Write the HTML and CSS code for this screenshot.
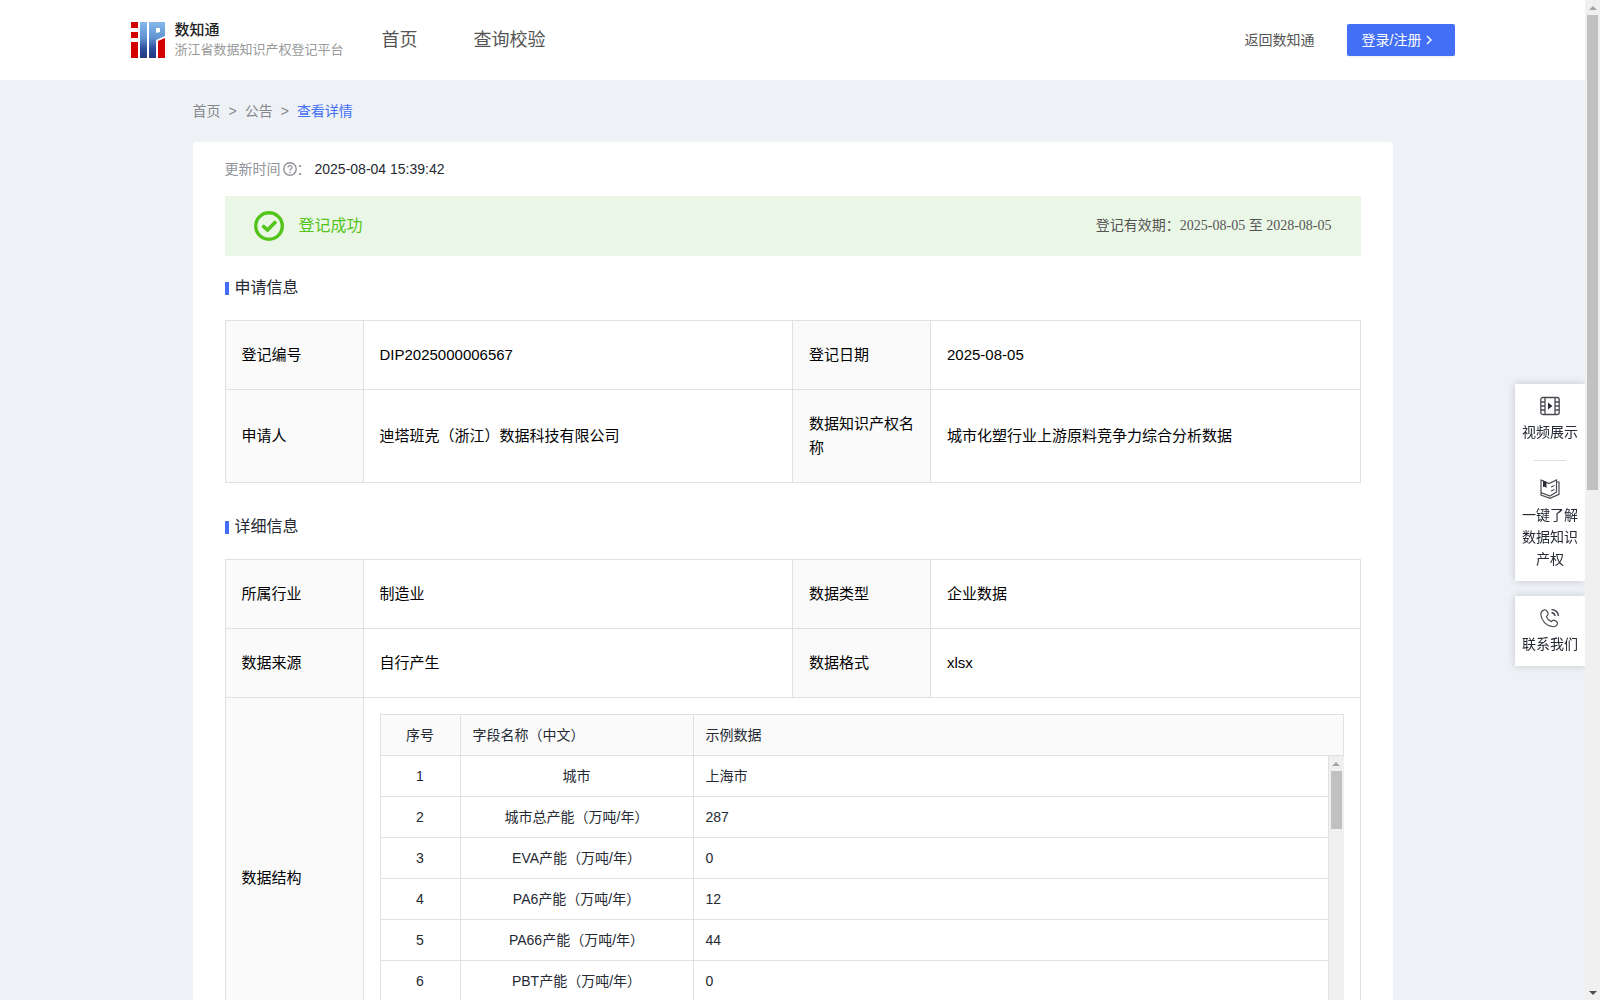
FILE: index.html
```html
<!DOCTYPE html>
<html lang="zh-CN">

<head>
  <meta charset="UTF-8">
  <meta name="viewport" content="width=device-width, initial-scale=1.0">
  <title>浙江省数据知识产权登记平台</title>
  <link rel="stylesheet" href="styles.css">
</head>

<body>

  <div class="page">
    <header class="header">
      <div class="header-inner">
        <a class="logo" href="#">
          <svg class="logo-icon" width="34" height="36" viewBox="0 0 34 36" aria-hidden="true">
            <defs>
              <linearGradient id="logoBlue" x1="0" y1="0" x2="0" y2="36" gradientUnits="userSpaceOnUse">
                <stop offset="0" stop-color="#86b8ec" />
                <stop offset="0.45" stop-color="#5f92d0" />
                <stop offset="0.75" stop-color="#2c4c9c" />
                <stop offset="1" stop-color="#27397f" />
              </linearGradient>
            </defs>
            <path fill="#d40000" d="M0 0h7v6H0zM0 10h7v6H0zM0 20h7v16H0zM27 19l7-3v20h-7z" />
            <path fill="url(#logoBlue)" fill-rule="evenodd" d="M9 0h7v36H9zM18 0h16v14l-9 4v18h-7zM25 6v5l4-1V6z" />
          </svg>
          <span class="logo-text">
            <strong>数知通</strong>
            <small>浙江省数据知识产权登记平台</small>
          </span>
        </a>
        <nav class="nav">
          <a href="#">首页</a>
          <a href="#">查询校验</a>
        </nav>
        <div class="header-right">
          <a class="back" href="#">返回数知通</a>
          <button class="login" type="button">登录/注册
            <svg width="8" height="10" viewBox="0 0 8 10" aria-hidden="true"><path d="M2 1l4 4-4 4" fill="none" stroke="#fff" stroke-width="1.4" /></svg>
          </button>
        </div>
      </div>
    </header>

    <main class="main">
      <div class="breadcrumb">
        <a href="#">首页</a><span>&gt;</span><a href="#">公告</a><span>&gt;</span><a class="current" href="#">查看详情</a>
      </div>

      <div class="card">
        <div class="update">
          <span class="update-label">更新时间</span>
          <svg class="help" width="14" height="14" viewBox="0 0 14 14" aria-hidden="true">
            <circle cx="7" cy="7" r="6.2" fill="none" stroke="#909399" stroke-width="1.4" />
            <path d="M5 5.6c0-2.6 4-2.6 4 0 0 1.4-2 1.4-2 2.8" fill="none" stroke="#909399" stroke-width="1.2" />
            <circle cx="7" cy="10.2" r="0.8" fill="#909399" />
          </svg>
          <span class="update-label">：</span>
          <span class="update-time">2025-08-04 15:39:42</span>
        </div>

        <div class="status">
          <svg width="30" height="30" viewBox="0 0 30 30" aria-hidden="true">
            <circle cx="15" cy="15" r="13.3" fill="none" stroke="#52c41a" stroke-width="3.4" />
            <path d="M8.5 14.5l5 4.5 8.5-8.5" fill="none" stroke="#52c41a" stroke-width="3.6" />
          </svg>
          <span class="status-text">登记成功</span>
          <span class="status-date">登记有效期：2025-08-05 至 2028-08-05</span>
        </div>

        <h2 class="title">申请信息</h2>
        <table class="info">
          <colgroup><col class="col-label"><col><col class="col-label"><col></colgroup>
          <tr>
            <th>登记编号</th>
            <td>DIP2025000006567</td>
            <th>登记日期</th>
            <td>2025-08-05</td>
          </tr>
          <tr>
            <th>申请人</th>
            <td>迪塔班克（浙江）数据科技有限公司</td>
            <th>数据知识产权名称</th>
            <td>城市化塑行业上游原料竞争力综合分析数据</td>
          </tr>
        </table>

        <h2 class="title">详细信息</h2>
        <table class="info">
          <colgroup><col class="col-label"><col><col class="col-label"><col></colgroup>
          <tr>
            <th>所属行业</th>
            <td>制造业</td>
            <th>数据类型</th>
            <td>企业数据</td>
          </tr>
          <tr>
            <th>数据来源</th>
            <td>自行产生</td>
            <th>数据格式</th>
            <td>xlsx</td>
          </tr>
          <tr>
            <th>数据结构</th>
            <td class="struct-cell" colspan="3">
              <table class="struct">
                <colgroup><col class="col-no"><col class="col-name"><col></colgroup>
                <tr>
                  <th class="center">序号</th>
                  <th>字段名称（中文）</th>
                  <th>示例数据</th>
                </tr>
              </table>
              <div class="struct-scroll">
                <div class="struct-view">
                  <table class="struct struct-body">
                    <colgroup><col class="col-no"><col class="col-name"><col></colgroup>
                    <tr><td>1</td><td>城市</td><td>上海市</td></tr>
                    <tr><td>2</td><td>城市总产能（万吨/年）</td><td>287</td></tr>
                    <tr><td>3</td><td>EVA产能（万吨/年）</td><td>0</td></tr>
                    <tr><td>4</td><td>PA6产能（万吨/年）</td><td>12</td></tr>
                    <tr><td>5</td><td>PA66产能（万吨/年）</td><td>44</td></tr>
                    <tr><td>6</td><td>PBT产能（万吨/年）</td><td>0</td></tr>
                  </table>
                </div>
                <div class="scrollbar" aria-hidden="true">
                  <i class="arrow up"></i>
                  <div class="track"><div class="thumb thumb-struct"></div></div>
                  <i class="arrow down"></i>
                </div>
              </div>
            </td>
          </tr>
        </table>
      </div>
    </main>

    <!-- 右侧悬浮栏 -->
    <aside class="side">
      <div class="side-box">
        <a class="side-item" href="#">
          <svg width="20" height="20" viewBox="0 0 20 20" fill="none" stroke="#4a4a52" stroke-width="1.3" aria-hidden="true">
            <rect x="0.8" y="1.5" width="18.4" height="17" rx="2" />
            <path d="M5 1.5v17M15 1.5v17M1 6h4M1 10h4M1 14h4M15 6h4M15 10h4M15 14h4" />
            <path d="M8 6.5v7l4.5-3.5z" fill="#2b2b36" stroke="none" />
          </svg>
          <span>视频展示</span>
        </a>
        <hr>
        <a class="side-item" href="#">
          <svg width="20" height="20" viewBox="0 0 20 20" fill="none" stroke="#4a4a52" stroke-width="1.2" aria-hidden="true">
            <path d="M1 1l8 3.5L16.5 1v12L10 17l-9-3.500z" />
            <path d="M1 14v2l9 3.300 9-4V3l-2 0" />
            <path d="M11 8l3.500-1.500M11 12l3.500-1.500" />
            <path d="M3 1.500l3.500 1.500v6L4.800 7.800 3 8z" fill="#2b2b36" stroke="none" />
          </svg>
          <span>一键了解数据知识产权</span>
        </a>
      </div>
      <div class="side-box">
        <a class="side-item" href="#">
          <svg width="20" height="20" viewBox="0 0 20 20" fill="none" stroke="#4a4a52" stroke-width="1.2" aria-hidden="true">
            <path d="M4.5 1.800C2 2.500 0.600 4.500 0.900 7c0.800 6 5.600 11 11.600 11.700 2.500 0.200 4.500-1.200 5-3.300 0.300-1.500-3.300-3.900-4.600-3.200l-1.600 1.400c-1.800-0.700-4.200-3-4.900-5l1.500-1.700C8.700 5.500 6.500 1.300 4.500 1.800z" />
            <path d="M11.500 4.500c2 0.300 3.300 1.500 3.500 3.500M11.500 1.500c4 0.300 6.500 2.500 7 6.500" stroke-width="1.500" />
          </svg>
          <span>联系我们</span>
        </a>
      </div>
    </aside>
  </div>

  <div class="scrollbar" aria-hidden="true">
    <i class="arrow up"></i>
    <div class="track"><div class="thumb thumb-page"></div></div>
    <i class="arrow down active"></i>
  </div>

</body>

</html>
```
FILE: styles.css
```css
* {
  box-sizing: border-box;
}

body {
  display: flex;
  height: 100vh;
  margin: 0;
  overflow: hidden;
  background: #eef2f6;
  color: #252933;
  font-family: "Liberation Sans", "Noto Sans CJK SC", sans-serif;
  font-size: 14px;
  line-height: 22px;
}

a {
  color: inherit;
  text-decoration: none;
}

.page {
  flex: 1;
  min-width: 0;
  overflow: hidden;
}

.header {
  height: 80px;
  background: #fff;
}

.header-inner {
  display: flex;
  align-items: center;
  max-width: 1324px;
  height: 100%;
  margin: 0 auto;
}

.logo {
  display: flex;
  align-items: center;
  gap: 10px;
}

.logo-text strong,
.logo-text small {
  display: block;
}

.logo-text strong {
  font-size: 15px;
  font-weight: 500;
  line-height: 20px;
  color: #222;
}

.logo-text small {
  font-size: 13px;
  line-height: 20px;
  color: #999;
}

.nav {
  display: flex;
  gap: 56px;
  margin-left: 38px;
  font-size: 18px;
  color: #555;
}

.header-right {
  display: flex;
  align-items: center;
  gap: 32px;
  margin-left: auto;
  color: #555;
}

.login {
  display: flex;
  align-items: center;
  gap: 4px;
  width: 108px;
  height: 32px;
  padding: 0 15px;
  border: 0;
  border-radius: 2px;
  background: #436ff6;
  box-shadow: 0 2px 0 rgba(0, 0, 0, 0.04);
  color: #fff;
  font: inherit;
  white-space: nowrap;
  cursor: pointer;
}

.main {
  max-width: 1200px;
  margin: 0 auto;
}

.breadcrumb {
  display: flex;
  gap: 8px;
  padding: 20px 0;
  color: #86888c;
}

.breadcrumb .current {
  color: #436ff6;
}

.card {
  padding: 16px 32px 32px;
  border-radius: 4px;
  background: #fff;
}

.update {
  display: flex;
  align-items: center;
}

.update-label {
  color: #909399;
}

.update-time {
  margin-left: 4px;
}

.help {
  margin-left: 2px;
}

.status {
  display: flex;
  align-items: center;
  gap: 15px;
  height: 60px;
  margin-top: 16px;
  padding: 0 29px;
  background: #ebf7e6;
}

.status-text {
  font-size: 16px;
  color: #52c41a;
}

.status-date {
  margin-left: auto;
  font-family: "Liberation Serif", "Noto Sans CJK SC", serif;
  color: #555;
}

.title {
  display: flex;
  align-items: center;
  gap: 6px;
  margin: 20px 0;
  font-size: 16px;
  font-weight: 400;
  line-height: 24px;
}

.title::before {
  content: "";
  width: 4px;
  height: 13px;
  background: #436ff6;
}

.info + .title {
  margin-top: 32px;
}

table {
  width: 100%;
  border-collapse: collapse;
  table-layout: fixed;
}

th,
td {
  border: 1px solid #e1e1e1;
  font-weight: 400;
  text-align: left;
}

th {
  background: #fafafa;
}

.col-label {
  width: 138px;
}

.info {
  font-size: 15px;
  line-height: 24px;
  color: #000;
}

.info th,
.info td {
  padding: 22px 16px;
}

.info .struct-cell {
  padding: 16px;
}

.col-no {
  width: 80px;
}

.col-name {
  width: 233px;
}

.struct {
  font-size: 14px;
  line-height: 22px;
  color: #252933;
}

.info .struct th,
.info .struct td {
  padding: 9px 12px;
}

.info .struct th.center,
.info .struct td:nth-child(-n+2) {
  text-align: center;
}

.struct-body tr:first-child td {
  border-top: 0;
}

.struct-scroll {
  display: flex;
  height: 286px;
}

.struct-view {
  flex: 1;
  overflow: hidden;
}

/* 滚动条 */
.scrollbar {
  display: flex;
  flex-direction: column;
  align-items: center;
  width: 15px;
  background: #f0f0f0;
}

.arrow {
  display: flex;
  align-items: center;
  justify-content: center;
  width: 15px;
  height: 15px;
}

.arrow::before {
  content: "";
  border: 4px solid transparent;
  border-top-width: 0;
  border-bottom-color: #a3a3a3;
}

.arrow.down::before {
  border-top: 4px solid #a3a3a3;
  border-bottom: 0;
}

.arrow.active::before {
  border-top-color: #505050;
}

.track {
  flex: 1;
  width: 11px;
}

.thumb {
  background: #c1c1c1;
}

.thumb-page {
  height: 49%;
}

.thumb-struct {
  height: 58px;
}

.side {
  position: fixed;
  top: 384px;
  right: 15px;
  display: flex;
  flex-direction: column;
  gap: 15px;
  width: 70px;
  /* 阴影不盖住滚动条 */
  clip-path: inset(-10px 0 -10px -10px);
}

.side-box {
  padding: 12px 7px 11px;
  background: #fff;
  box-shadow: 0 0 8px rgba(0, 0, 0, 0.18);
}

.side-item {
  display: flex;
  flex-direction: column;
  align-items: center;
  gap: 5px;
  text-align: center;
}

.side hr {
  width: 32px;
  margin: 17px auto 18px;
  border: 0;
  border-top: 1px solid #ddd;
}
```
